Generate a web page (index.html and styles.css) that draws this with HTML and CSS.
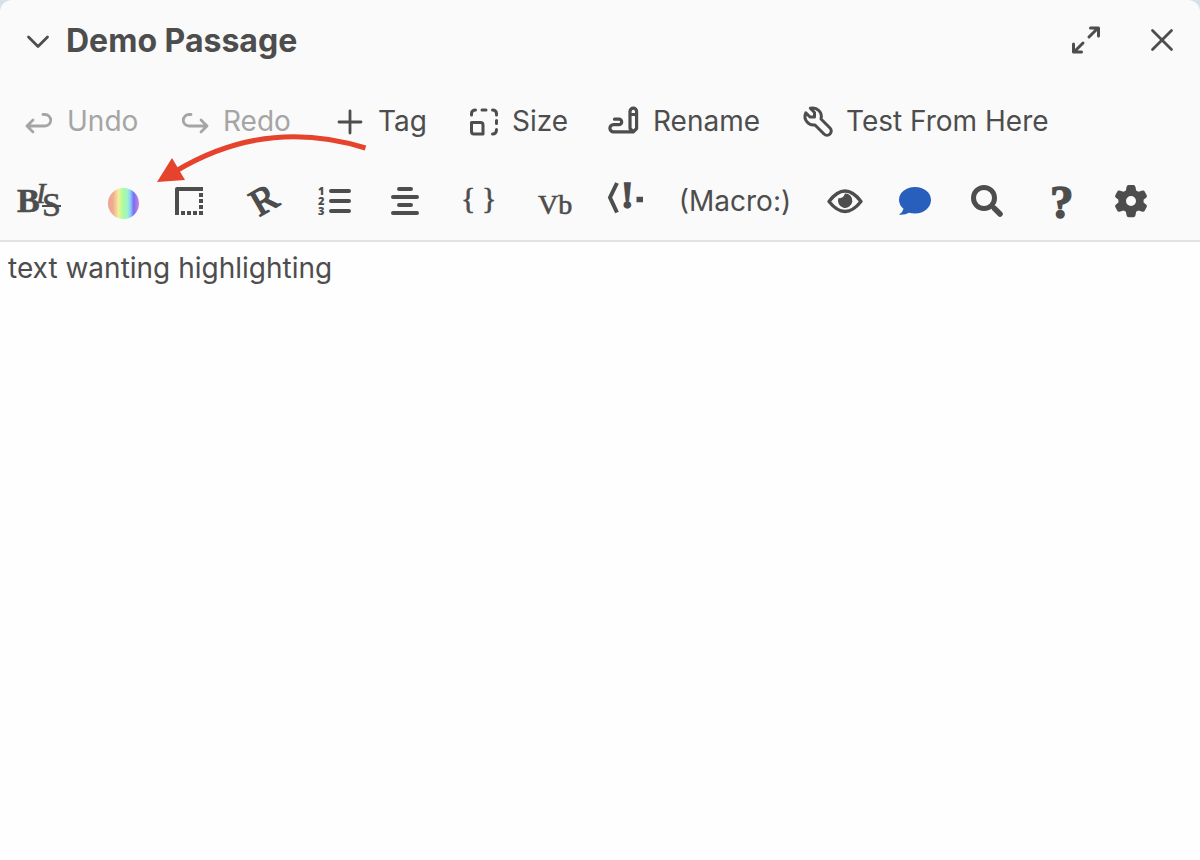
FILE: index.html
```html
<!DOCTYPE html>
<html lang="en">
<head>
<meta charset="utf-8">
<title>Demo Passage</title>
<link rel="stylesheet" href="styles.css">
</head>
<body>
<main class="dialog">
  <header class="header">
    <button class="title-button" aria-expanded="true">
      <svg class="icon" viewBox="20 23 36 36" aria-hidden="true"><path d="M28.500 37l9.500 9.500l9.500-9.500"/></svg>
      <h1 class="title">Demo Passage</h1>
    </button>
    <div class="window-actions">
      <button class="icon-button" aria-label="Maximize"><svg class="icon" viewBox="1068 22 36 36" aria-hidden="true"><path d="M1089 37l9-9M1090.500 28h8v8M1083 43l-9 9M1073.500 44v8h8" stroke-width="3"/></svg></button>
      <button class="icon-button" aria-label="Close"><svg class="icon" viewBox="1144 22 36 36" aria-hidden="true"><path d="M1152.500 30.500l19 19M1171.500 30.500l-19 19"/></svg></button>
    </div>
  </header>
  <nav class="actions" aria-label="Passage actions">
    <button class="action" disabled><svg class="icon" viewBox="21 104 36 36" aria-hidden="true"><path d="M33 121l-6 6l6 6M27 127h18a5.700 5.700 0 0 0 0-11.500h-2"/></svg>Undo</button>
    <button class="action" disabled><svg class="icon" viewBox="177 104 36 36" aria-hidden="true"><path d="M201 121l6 6l-6 6M207 127h-18a5.700 5.700 0 0 1 0-11.500h2"/></svg>Redo</button>
    <button class="action"><svg class="icon" viewBox="332 103 36 36" aria-hidden="true"><path d="M350 111v22M339 122h22"/></svg>Tag</button>
    <button class="action"><svg class="icon" viewBox="466 103 36 36" aria-hidden="true"><path d="M471.500 122.500h9q2.500 0 2.500 2.500v9h-9q-2.500 0-2.500-2.500zM471.500 115v-1q0-4 4-4M482 110h4M492.500 110q4 0 4 4v1M496.500 120.500v3M496.500 129.500q0 4.500-4 4.500" stroke-width="3"/></svg>Size</button>
    <button class="action"><svg class="icon" viewBox="607 104 36 36" aria-hidden="true"><path d="M630 129.500v-17a3.300 3.300 0 0 1 6.600 0v17l-3.300 3.300zM630 115.500h6.600M633 132.800h-19.500a3.600 3.600 0 0 1 0-7.200h5.500a2.700 2.700 0 0 0 0-5.400h-4.500" stroke-width="3.200"/></svg>Rename</button>
    <button class="action"><svg class="icon" viewBox="800 104 36 36" aria-hidden="true"><path d="M809.500 115.500h4.500v-4.500l-4.200-4.200a8.700 8.700 0 0 1 10.700 10.700l9 9a3 3 0 0 1-6 6l-9-9a8.700 8.700 0 0 1-9.200-12.200z" transform="translate(0.500 2.500)" stroke-width="3"/></svg>Test From Here</button>
  </nav>
  <div class="tools" role="toolbar" aria-label="Formatting">
    <button class="tool tool-first" aria-label="Text styles"><svg class="glyph" viewBox="14 177 56 48"><text class="serif medium bold" x="17" y="212" font-size="34">B</text><text class="serif medium" x="36" y="203" font-size="29" font-style="italic">I</text><text class="serif medium" x="42" y="216" font-size="34">S</text><path d="M42 206h19" stroke-width="1.800"/></svg></button>
    <button class="tool" aria-label="Colour"><svg class="glyph" viewBox="96 177 48 48"><defs><linearGradient id="rainbow"><stop offset="0" stop-color="#eda196"/><stop offset=".17" stop-color="#f0ae91"/><stop offset=".34" stop-color="#f3ef9b"/><stop offset=".5" stop-color="#a5ff9c"/><stop offset=".64" stop-color="#a0efd0"/><stop offset=".73" stop-color="#88c9fa"/><stop offset=".83" stop-color="#756ef3"/><stop offset="1" stop-color="#d485da"/></linearGradient></defs><circle cx="123.500" cy="203.500" r="15.500" fill="url(#rainbow)"/></svg></button>
    <button class="tool" aria-label="Borders"><svg class="glyph" viewBox="168 177 48 48"><path d="M177 215v-26h26" stroke-width="4" stroke-linejoin="round"/><path d="M181 213h22M201 193v22" stroke-width="4" stroke-dasharray="4 2"/></svg></button>
    <button class="tool" aria-label="Rotated text"><svg class="glyph" viewBox="240 177 48 48"><text class="serif heavy" x="259" y="217" font-size="38" transform="rotate(-30 259 217)">R</text></svg></button>
    <button class="tool" aria-label="List"><svg class="glyph" viewBox="312 177 48 48"><path d="M331 191h18M331 201h18M331 211h18" stroke-width="4" stroke-linecap="round"/><text class="numeral" x="318" y="195" font-size="11">1</text><text class="numeral" x="318" y="205" font-size="11">2</text><text class="numeral" x="318" y="215" font-size="11">3</text></svg></button>
    <button class="tool" aria-label="Alignment"><svg class="glyph" viewBox="384 177 48 48"><path d="M399 189h12M393 197h24M399 205h12M393 213h24" stroke-width="4" stroke-linecap="round"/></svg></button>
    <button class="tool" aria-label="Collapse whitespace"><svg class="glyph" viewBox="456 177 48 48"><text class="serif medium" x="461" y="208" font-size="30">{</text><text class="serif medium" x="482" y="208" font-size="30">}</text></svg></button>
    <button class="tool" aria-label="Verbatim"><svg class="glyph" viewBox="528 177 48 48"><text class="serif medium" x="538" y="214" font-size="28">Vb</text></svg></button>
    <button class="tool" aria-label="Comment"><svg class="glyph" viewBox="600 177 48 48"><path d="M617 183l-7 14.500l7 15" stroke-width="4"/><text class="serif bold heavy" x="621" y="208" font-size="38">!</text><path d="M636.500 199.500h6.500" stroke-width="5.500"/></svg></button>
    <button class="tool tool-text">(Macro:)</button>
    <button class="tool" aria-label="Proofread"><svg class="glyph" viewBox="822 177 48 48"><path d="M829 201.500q16-21 32 0q-16 20-32 0z" stroke-width="3.400" stroke-linejoin="round"/><path class="solid" d="M838.500 198q4.500 1 6.500-4.500a7.200 7.200 0 1 1-6.500 4.500z"/></svg></button>
    <button class="tool" aria-label="Tooltips"><svg class="glyph" viewBox="894 177 48 48"><path class="blue" d="M915 187c9 0 16 5.500 16 13s-7 13.500-16 13.500q-3.500 0-6-.8q-4 2.500-10 2q4-3 4.500-6q-4.500-3.500-4.500-8.700c0-7.500 7-13 16-13z"/></svg></button>
    <button class="tool" aria-label="Find"><svg class="glyph" viewBox="966 177 48 48"><circle cx="984" cy="198" r="10.500" stroke-width="5"/><path d="M991.500 205.500l2.500 2.500" stroke-width="4"/><path d="M994.500 208.500l5.500 5.500" stroke-width="5.500" stroke-linecap="round"/></svg></button>
    <button class="tool" aria-label="Help"><svg class="glyph" viewBox="1038 177 48 48"><text class="serif bold heavy" x="1050" y="218" font-size="47">?</text></svg></button>
    <button class="tool" aria-label="Options"><svg class="glyph" viewBox="1110 177 48 48"><path class="solid" fill-rule="evenodd" d="M1128.500 185h5q1.500 0 2 2l.6 3.500l2.400 1.300l4-1.300q1.500-.4 2.200 1l2 3.700q.7 1.300-.4 2.300l-2.700 2.300v2.700l2.700 2.300q1.100 1 .4 2.300l-2 3.700q-.7 1.300-2.200 1l-4-1.300l-2.400 1.300l-.6 3.500q-.5 2-2 2h-5q-1.500 0-2-2l-.6-3.500l-2.400-1.300l-4 1.300q-1.500.3-2.200-1l-2-3.700q-.7-1.300.4-2.300l2.700-2.300v-2.700l-2.700-2.300q-1.100-1-.4-2.300l2-3.700q.7-1.400 2.200-1l4 1.300l2.400-1.300l.6-3.500q.5-2 2-2zM1131 196a5 5 0 1 0 0 10a5 5 0 1 0 0-10z"/></svg></button>
  </div>
  <textarea class="editor" aria-label="Passage text" spellcheck="false">text wanting highlighting</textarea>
  <svg class="pointer" viewBox="150 125 220 62" aria-hidden="true"><path d="M365.500 148Q266 117 176 171" fill="none" stroke="#e5432b" stroke-width="5"/><path d="M157 182l15-24l13 22z" fill="#e5432b"/></svg>
</main>
</body>
</html>
```
FILE: styles.css
```css
* {
  box-sizing: border-box;
}

body {
  margin: 0;
  background: #d9dfea;
  color: #4d4d4d;
  font: 28px/36px Inter, "Liberation Sans", sans-serif;
}

.dialog {
  position: relative;
  display: flex;
  flex-direction: column;
  min-height: 100vh;
  border-radius: 12px 12px 0 0;
  background: #fafafa;
  overflow: hidden;
}

button {
  padding: 0;
  border: 0;
  background: none;
  color: inherit;
  font: inherit;
}

.header {
  display: flex;
  align-items: center;
  justify-content: space-between;
  height: 80px;
  padding: 0 20px;
}

.title-button {
  display: flex;
  align-items: center;
  gap: 10px;
  padding-top: 2px;
}

.title {
  margin: 0;
  font-size: 32px;
  font-weight: 700;
}

.window-actions {
  display: flex;
  gap: 40px;
}

.icon-button {
  display: flex;
}

.icon {
  flex: none;
  width: 36px;
  height: 36px;
  fill: none;
  stroke: currentColor;
  stroke-width: 2.8;
  stroke-linecap: round;
  stroke-linejoin: round;
}

.actions {
  display: grid;
  grid-template-columns: 156px 155px 134px 141px 193px auto;
  align-items: center;
  height: 82px;
  padding-left: 21px;
}

.action {
  display: flex;
  align-items: center;
  gap: 10px;
  white-space: nowrap;
}

.action:disabled {
  color: #a5a5a5;
}

.tools {
  display: flex;
  height: 80px;
  border-bottom: 2px solid #e2e2e2;
}

.tool {
  display: flex;
  flex: 0 0 72px;
  align-items: center;
  justify-content: center;
}

.tool-first {
  flex-basis: 84px;
}

.tool-text {
  flex-basis: 150px;
}

.glyph {
  height: 48px;
  fill: none;
  stroke: currentColor;
  overflow: visible;
}

.glyph text,
.glyph .solid {
  fill: currentColor;
  stroke: none;
}

.glyph circle[fill] {
  stroke: none;
}

.glyph .blue {
  fill: #285fbd;
  stroke: none;
}

.serif {
  font-family: "Liberation Serif", serif;
}

.bold {
  font-weight: 700;
}

.glyph .medium {
  stroke: currentColor;
  stroke-width: 0.6;
}

.glyph .heavy {
  stroke: currentColor;
  stroke-width: 1.4;
}

.numeral {
  font-family: "Noto Sans", sans-serif;
  font-weight: 900;
}

.editor {
  flex: 1;
  padding: 8px;
  border: 0;
  outline: 0;
  resize: none;
  background: #fefefe;
  color: inherit;
  font: inherit;
}

.pointer {
  position: absolute;
  top: 125px;
  left: 150px;
  width: 220px;
  pointer-events: none;
}
```
